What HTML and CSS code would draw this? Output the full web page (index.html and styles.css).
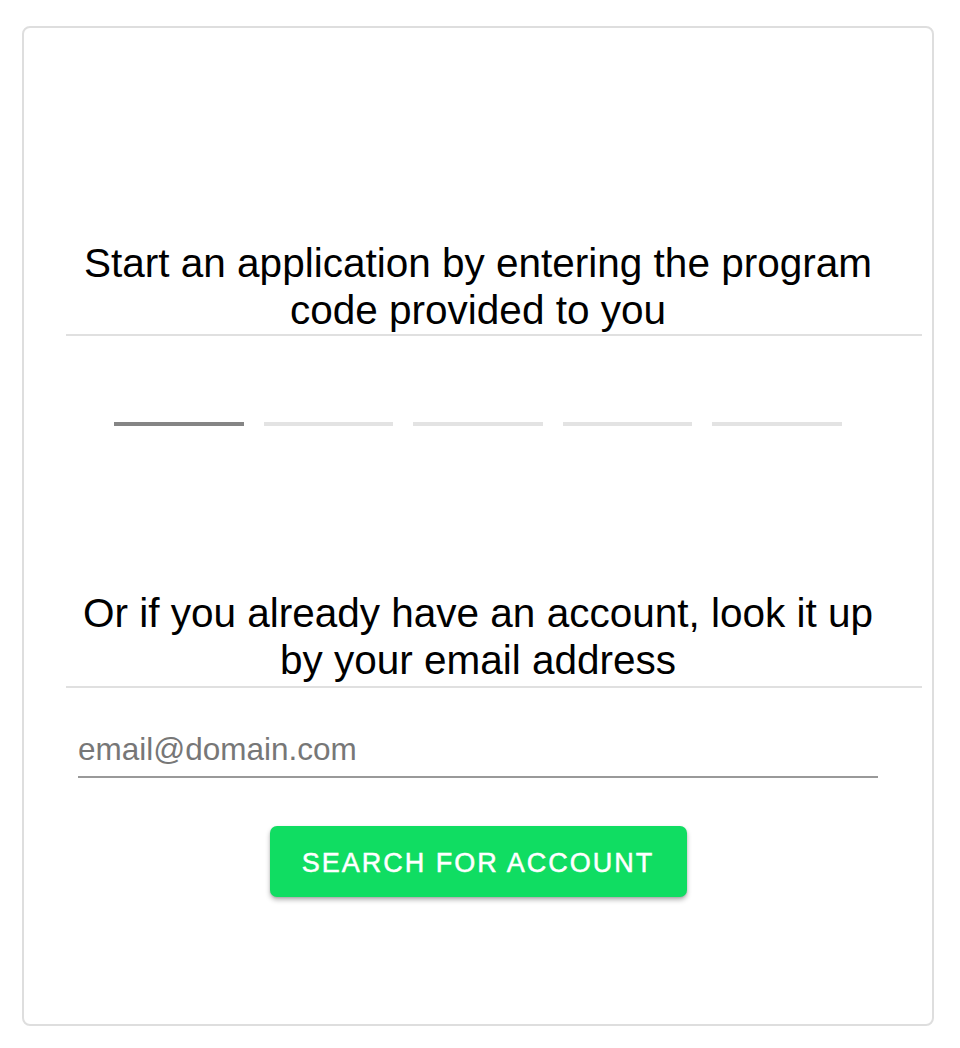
FILE: index.html
```html
<!DOCTYPE html>
<html lang="en">
<head>
<meta charset="utf-8">
<title>Program code</title>
<link rel="stylesheet" href="styles.css">
</head>
<body>
<div class="card">
  <section class="block block-code">
    <h2 class="title">Start an application by entering the program code provided to you</h2>
    <div class="rule"></div>
    <div class="code">
      <span class="seg seg-active"></span>
      <span class="seg"></span>
      <span class="seg"></span>
      <span class="seg"></span>
      <span class="seg"></span>
    </div>
  </section>
  <section class="block block-email">
    <h2 class="title">Or if you already have an account, look it up by your email address</h2>
    <div class="rule rule-email"></div>
    <input class="email" type="email" placeholder="email@domain.com">
    <button class="btn" type="button">Search for account</button>
  </section>
</div>
</body>
</html>
```
FILE: styles.css
```css
html, body {
  margin: 0;
  padding: 0;
  background: #fff;
}
body {
  font-family: "Liberation Sans", Arial, Helvetica, sans-serif;
  color: #000;
}
.card {
  box-sizing: border-box;
  width: 912px;
  height: 1000px;
  margin: 26px 0 0 22px;
  border: 2px solid #dedede;
  border-radius: 8px;
  display: flex;
  flex-direction: column;
}
.block {
  display: flex;
  flex-direction: column;
}
.block-code {
  margin-top: 212px;
}
.block-email {
  margin-top: 164px;
}
.title {
  margin: 0 40px;
  font-size: 40.5px;
  font-weight: 400;
  line-height: 47px;
  text-align: center;
}
.rule {
  height: 2px;
  background: #e0e0e0;
  margin: 0 10px 0 42px;
}
.rule-email {
  margin-top: 2px;
}
.code {
  display: flex;
  gap: 20px;
  width: 728px;
  margin: 86px auto 0;
}
.seg {
  flex: 1;
  height: 4px;
  background: #e3e3e3;
}
.seg-active {
  background: #858585;
}
.email {
  display: block;
  box-sizing: content-box;
  width: 800px;
  height: 54px;
  margin: 34px auto 0;
  padding: 0;
  border: none;
  border-bottom: 2px solid #999;
  outline: none;
  font-family: "Liberation Sans", Arial, Helvetica, sans-serif;
  font-size: 31.5px;
  color: #222;
  background: transparent;
}
.email::placeholder {
  color: #777;
  opacity: 1;
}
.btn {
  align-self: center;
  width: 417px;
  height: 71px;
  margin-top: 48px;
  border: none;
  border-radius: 7px;
  background: #10dd62;
  color: #fff;
  font-family: "Liberation Sans", Arial, Helvetica, sans-serif;
  font-size: 27px;
  letter-spacing: 2px;
  text-transform: uppercase;
  -webkit-text-stroke: 0.5px #fff;
  box-shadow: 0 3px 5px rgba(0, 0, 0, 0.28), 0 1px 2px rgba(0, 0, 0, 0.12);
  cursor: pointer;
  padding: 4px 0 0;
}
```
